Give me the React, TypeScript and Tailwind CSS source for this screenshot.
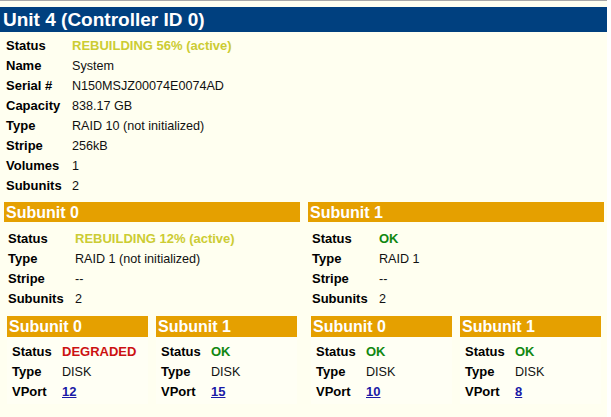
import React from 'react';

type Row = { label: string; value: string; tone?: 'rebuild' | 'ok' | 'bad' | 'link' };

const toneClass = (tone?: Row['tone']) => {
  if (tone === 'rebuild') return 'text-[13px] font-bold text-[#cccc33]';
  if (tone === 'ok') return 'text-[13px] font-bold text-[#118811]';
  if (tone === 'bad') return 'text-[13px] font-bold text-[#cc1111]';
  if (tone === 'link') return 'text-[13px] font-bold text-[#1a1aa6] underline';
  return 'text-[12.6px] text-[#111]';
};

const Rows = ({ rows, labelWidth }: { rows: Row[]; labelWidth: string }) => (
  <div className="flex flex-col">
    {rows.map(r => (
      <div key={r.label} className="flex h-[20px] items-center leading-[20px]">
        <div className={`${labelWidth} shrink-0 text-[13px] font-bold text-black`}>{r.label}</div>
        <div className={toneClass(r.tone)}>{r.value}</div>
      </div>
    ))}
  </div>
);

const mainRows: Row[] = [
  { label: 'Status', value: 'REBUILDING 56% (active)', tone: 'rebuild' },
  { label: 'Name', value: 'System' },
  { label: 'Serial #', value: 'N150MSJZ00074E0074AD' },
  { label: 'Capacity', value: '838.17 GB' },
  { label: 'Type', value: 'RAID 10 (not initialized)' },
  { label: 'Stripe', value: '256kB' },
  { label: 'Volumes', value: '1' },
  { label: 'Subunits', value: '2' },
];

const groups: { title: string; rows: Row[]; disks: { title: string; status: Row; port: string }[] }[] = [
  {
    title: 'Subunit 0',
    rows: [
      { label: 'Status', value: 'REBUILDING 12% (active)', tone: 'rebuild' },
      { label: 'Type', value: 'RAID 1 (not initialized)' },
      { label: 'Stripe', value: '--' },
      { label: 'Subunits', value: '2' },
    ],
    disks: [
      { title: 'Subunit 0', status: { label: 'Status', value: 'DEGRADED', tone: 'bad' }, port: '12' },
      { title: 'Subunit 1', status: { label: 'Status', value: 'OK', tone: 'ok' }, port: '15' },
    ],
  },
  {
    title: 'Subunit 1',
    rows: [
      { label: 'Status', value: 'OK', tone: 'ok' },
      { label: 'Type', value: 'RAID 1' },
      { label: 'Stripe', value: '--' },
      { label: 'Subunits', value: '2' },
    ],
    disks: [
      { title: 'Subunit 0', status: { label: 'Status', value: 'OK', tone: 'ok' }, port: '10' },
      { title: 'Subunit 1', status: { label: 'Status', value: 'OK', tone: 'ok' }, port: '8' },
    ],
  },
];

export default function App() {
  return (
    <div className="flex min-h-screen bg-white font-['Liberation_Sans',Arial,sans-serif]">
      <div className="w-[607px] border-t border-[#a8a8a8] bg-[#fffff0] pt-[6px]">
        <div className="h-[25px] bg-[#00407f] pl-[3px] text-[19px] font-bold leading-[26px] text-white">
          Unit 4 (Controller ID 0)
        </div>
        <div className="pl-[6px] pt-[4px]">
          <Rows rows={mainRows} labelWidth="w-[66px]" />
        </div>
        <div className="mt-[6px] flex gap-[8px] px-[4px]">
          {groups.map(g => (
            <div key={g.title} className="w-[296px]">
              <div className="h-[20px] bg-[#e5a000] pl-[2px] text-[16px] font-bold leading-[21px] text-white">
                {g.title}
              </div>
              <div className="pl-[4px] pt-[7px]">
                <Rows rows={g.rows} labelWidth="w-[67px]" />
              </div>
              <div className="mt-[7px] flex gap-[8px] px-[3px]">
                {g.disks.map(d => (
                  <div key={d.title} className="w-[141px] bg-[#fffff4] pb-[2px]">
                    <div className="h-[21px] bg-[#e5a000] pl-[2px] text-[16px] font-bold leading-[22px] text-white">
                      {d.title}
                    </div>
                    <div className="pl-[5px] pt-[5px]">
                      <Rows
                        rows={[
                          d.status,
                          { label: 'Type', value: 'DISK' },
                          { label: 'VPort', value: d.port, tone: 'link' },
                        ]}
                        labelWidth="w-[50px]"
                      />
                    </div>
                  </div>
                ))}
              </div>
            </div>
          ))}
        </div>
      </div>
    </div>
  );
}
